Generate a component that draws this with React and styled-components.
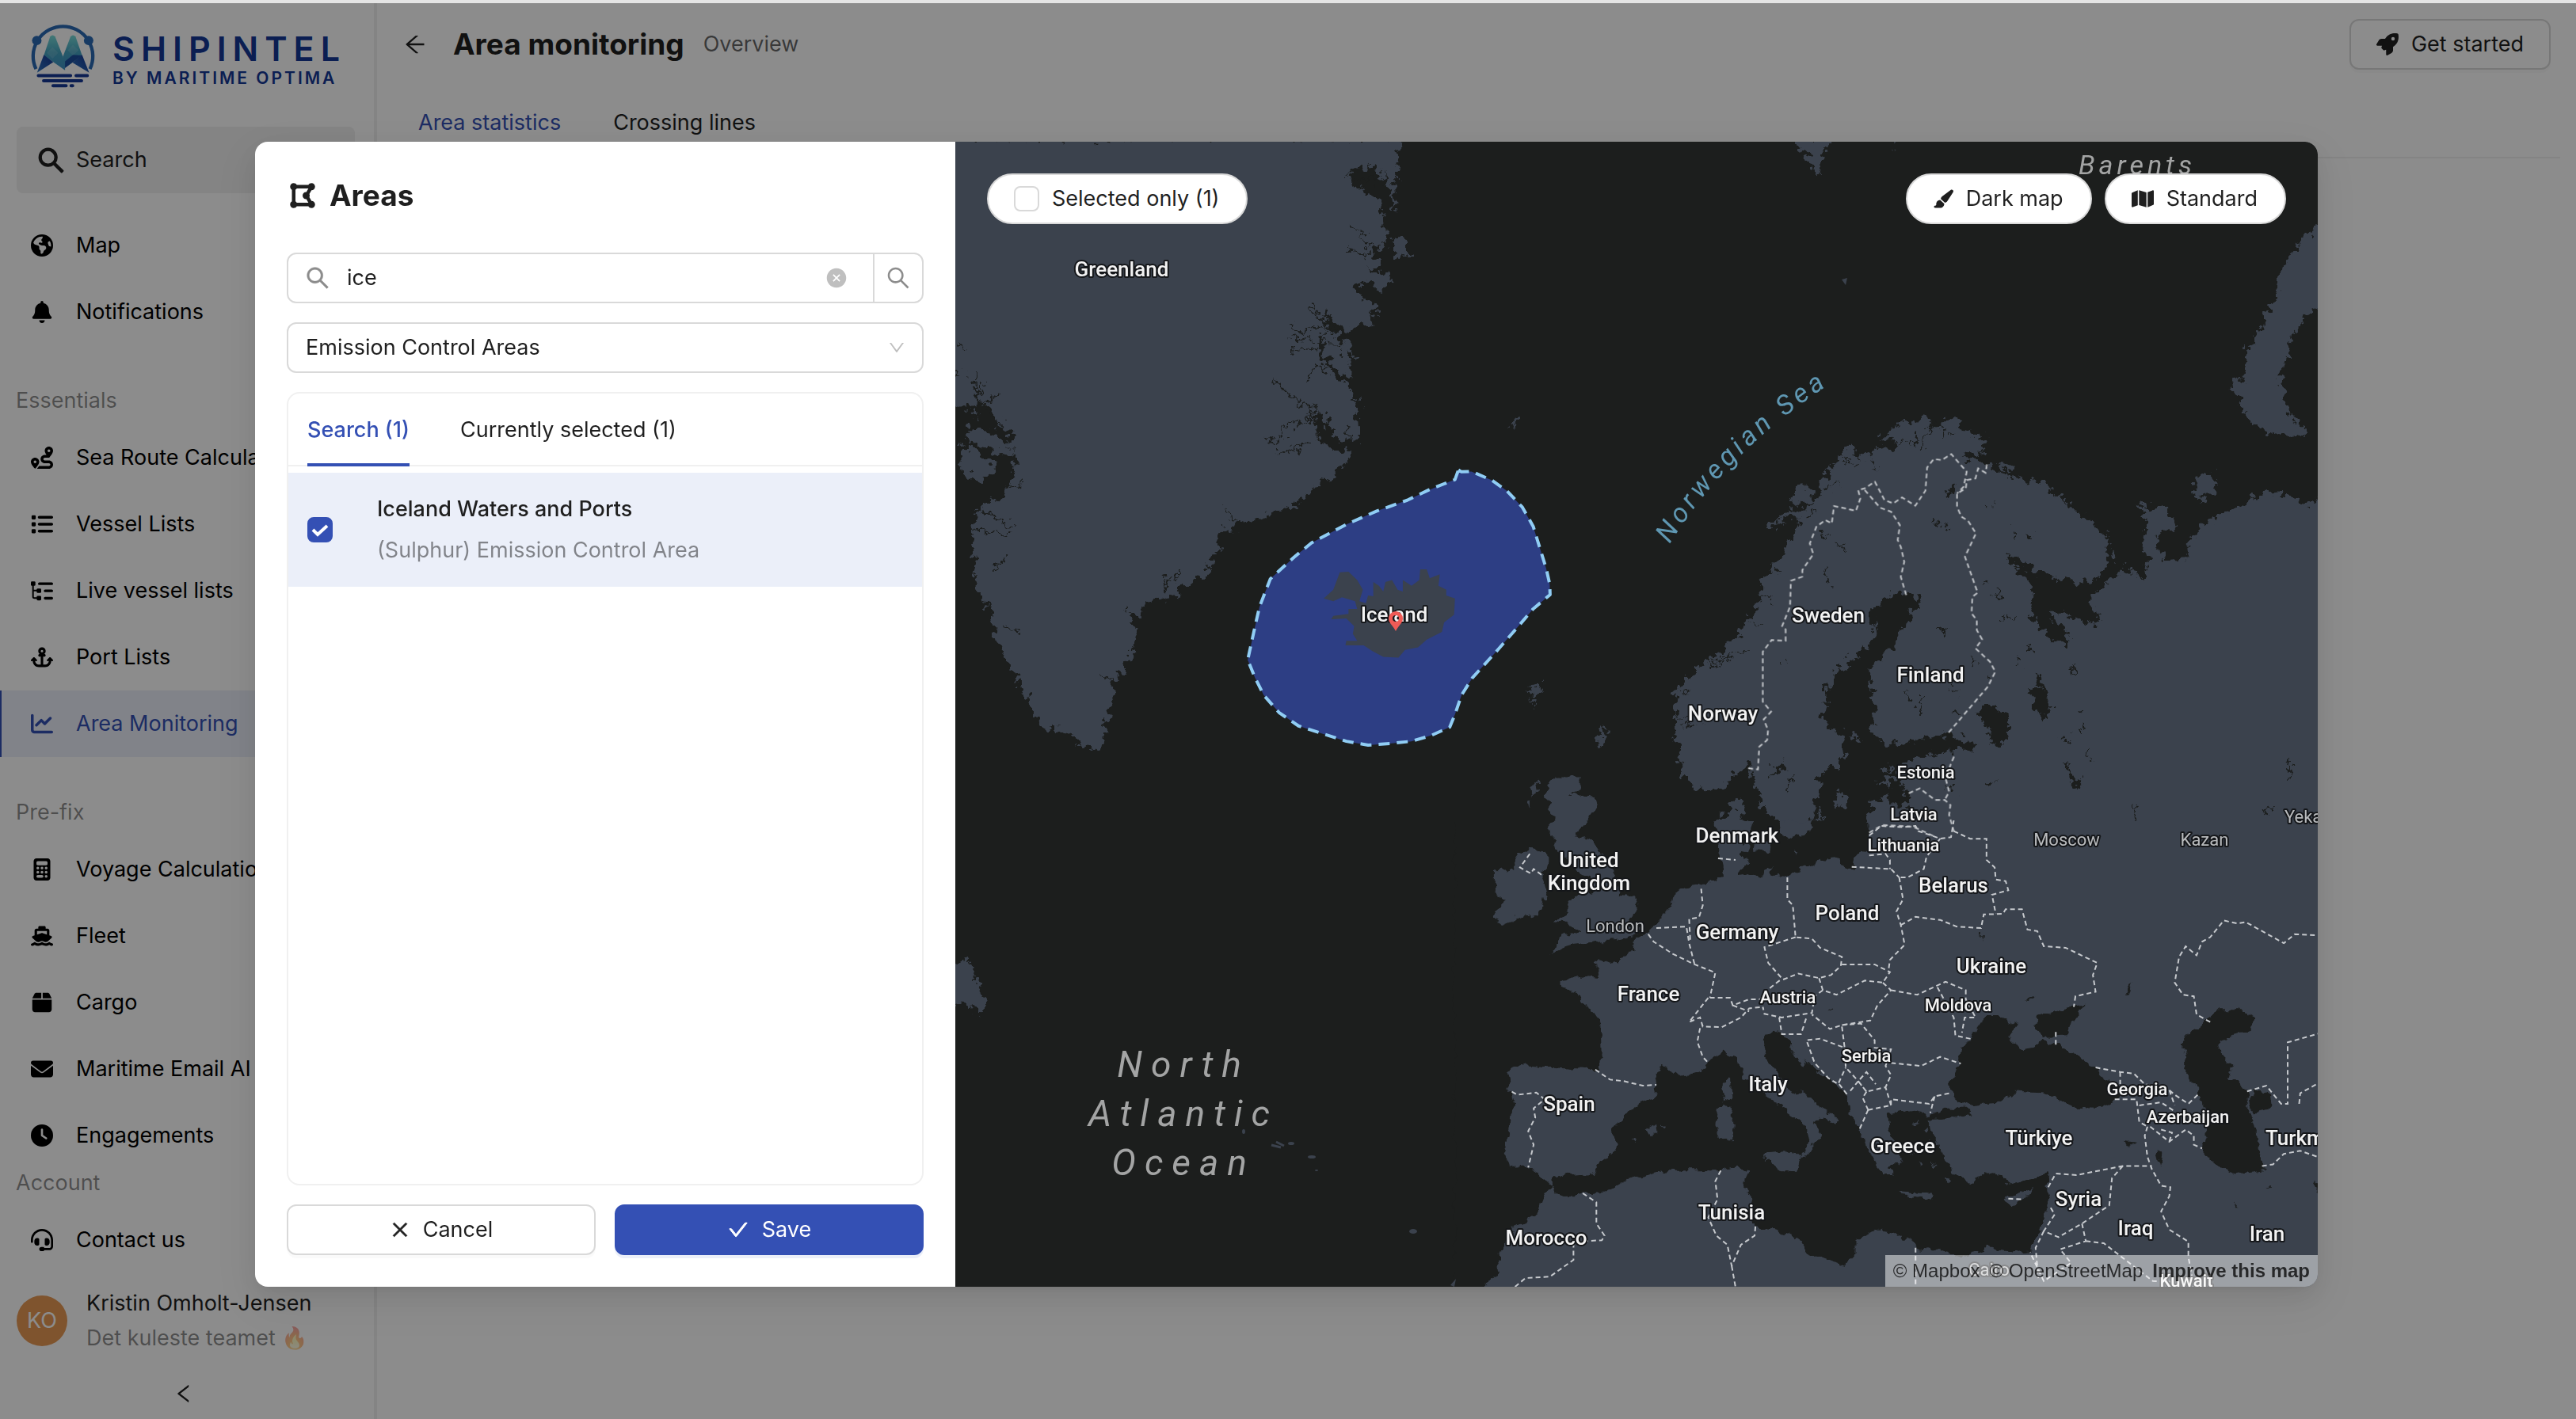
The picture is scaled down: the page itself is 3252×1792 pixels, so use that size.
import React, { useState } from "react";
import styled, { createGlobalStyle, css } from "styled-components";
import {
  FaAnchor,
  FaBell,
  FaBox,
  FaCalculator,
  FaChartLine,
  FaClock,
  FaDrawPolygon,
  FaEarthAmericas,
  FaEnvelope,
  FaHeadset,
  FaList,
  FaMap,
  FaPaintbrush,
  FaRocket,
  FaRoute,
  FaShip,
} from "react-icons/fa6";
import {
  AiFillCloseCircle,
  AiOutlineArrowLeft,
  AiOutlineCheck,
  AiOutlineClose,
  AiOutlineDown,
  AiOutlineLeft,
  AiOutlineSearch,
} from "react-icons/ai";

const primary = "#3450b4";
const ink = "#1f1f1f";
const muted = "rgba(0, 0, 0, 0.45)";
const line = "#f0f0f0";
const control = "#d9d9d9";
const land = "#3b424d";
const water = "#1c1e1d";

const GlobalStyle = createGlobalStyle`
  * {
    box-sizing: border-box;
  }
  body {
    margin: 0;
    background: #fff;
    color: ${ink};
    font-family: Inter, "Liberation Sans", "Noto Color Emoji", sans-serif;
    font-size: 27px;
    line-height: 44px;
  }
  button, input, select {
    font: inherit;
    color: inherit;
    margin: 0;
  }
  button {
    cursor: pointer;
  }
`;

/* ---------- page ---------- */

const Page = styled.div`
  display: flex;
  height: 100vh;
  border-top: 4px solid #e4e4e4;
  overflow: hidden;
`;

const Sidebar = styled.aside`
  flex: none;
  width: 476px;
  display: flex;
  flex-direction: column;
  border-right: 4px solid ${line};
`;

const Brand = styled.a`
  display: flex;
  gap: 22px;
  height: 156px;
  padding: 25px 0 0 39px;
  color: #153896;
  text-decoration: none;
`;

const BrandText = styled.span`
  display: flex;
  flex-direction: column;
  gap: 4px;
  padding-top: 10px;
`;

const BrandName = styled.span`
  font-size: 43px;
  font-weight: 600;
  letter-spacing: 8px;
  line-height: 44px;
`;

const BrandBy = styled.span`
  font-size: 21px;
  font-weight: 600;
  letter-spacing: 3px;
  line-height: 24px;
`;

const SidebarSearch = styled.button`
  display: flex;
  align-items: center;
  gap: 12px;
  height: 84px;
  margin: 0 24px 24px 21px;
  padding: 0 24px;
  border: 0;
  border-radius: 8px;
  background: ${line};

  svg {
    stroke: currentColor;
    stroke-width: 36;
  }
`;

const Nav = styled.nav`
  flex: 1;
  min-height: 0;
  overflow: hidden;
`;

const NavHeading = styled.h2`
  margin: 0;
  padding: 48px 20px 8px;
  color: ${muted};
  font-size: 27px;
  font-weight: 400;
`;

const NavLink = styled.a`
  display: flex;
  align-items: center;
  gap: 29px;
  height: 84px;
  padding-left: 39px;
  color: #000;
  text-decoration: none;
  white-space: nowrap;

  svg {
    flex: none;
    width: 28px;
  }

  ${(p) =>
    p.$active &&
    css`
      color: ${primary};
      background: #ebeff9;
      box-shadow: inset 2px 0 ${primary};
    `}
`;

const FooterHeading = styled(NavHeading)`
  padding: 0 20px 12px;
  line-height: 36px;
`;

const Profile = styled.div`
  display: flex;
  align-items: center;
  gap: 24px;
  padding: 16px 21px;
`;

const Avatar = styled.span`
  width: 64px;
  height: 64px;
  display: grid;
  place-items: center;
  border-radius: 50%;
  background: #e89a55;
  color: #fff;
`;

const ProfileText = styled.div`
  display: flex;
  flex-direction: column;
`;

const Team = styled.span`
  color: ${muted};
`;

const Collapse = styled.button`
  display: grid;
  place-items: center;
  height: 64px;
  padding: 0 8px 0 0;
  border: 0;
  background: none;
`;

const Main = styled.main`
  flex: 1;
  min-width: 0;
`;

const Header = styled.header`
  display: flex;
  align-items: center;
  gap: 24px;
  height: 104px;
  padding: 0 32px;
`;

const BackButton = styled.button`
  display: flex;
  padding: 0;
  border: 0;
  background: none;
`;

const Title = styled.h1`
  margin: 0 0 0 8px;
  font-size: 37px;
  font-weight: 700;
`;

const Subtitle = styled.span`
  flex: 1;
  color: rgba(0, 0, 0, 0.6);
`;

const OutlineButton = styled.button`
  display: flex;
  align-items: center;
  gap: 16px;
  height: 64px;
  padding: 0 32px;
  border: 2px solid ${control};
  border-radius: 12px;
  background: #fff;
  box-shadow: 0 4px 0 rgba(0, 0, 0, 0.02);
`;

const PageTabs = styled.div`
  display: flex;
  gap: 66px;
  height: 92px;
  margin: 0 20px 0 32px;
  padding: 0 20px;
  border-bottom: 2px solid ${line};
`;

const Tab = styled.button`
  padding: 4px 0 0;
  border: 0;
  background: none;
  white-space: nowrap;
  color: ${(p) => (p.$active ? primary : "inherit")};
`;

/* ---------- modal ---------- */

const Overlay = styled.div`
  position: fixed;
  inset: 4px 0 0 0;
  display: flex;
  padding: 175px 326px 167px 322px;
  background: rgba(0, 0, 0, 0.45);
`;

const Modal = styled.div`
  flex: 1;
  display: flex;
  overflow: hidden;
  border-radius: 16px;
  background: #fff;
  box-shadow: 0 12px 32px rgba(0, 0, 0, 0.08), 0 6px 12px -8px rgba(0, 0, 0, 0.12),
    0 18px 56px 16px rgba(0, 0, 0, 0.05);
`;

const Panel = styled.section`
  flex: none;
  width: 884px;
  display: flex;
  flex-direction: column;
  gap: 24px;
  padding: 40px;
`;

const PanelTitle = styled.h2`
  display: flex;
  align-items: center;
  gap: 16px;
  height: 56px;
  margin: 0 0 20px;
  padding-left: 2px;
  font-size: 37px;
  font-weight: 700;
`;

const SearchForm = styled.form`
  display: flex;
  height: 64px;
  border: 2px solid ${control};
  border-radius: 12px;
`;

const SearchLabel = styled.label`
  flex: 1;
  display: flex;
  align-items: center;
  gap: 20px;
  padding-left: 20px;
  color: #8c8c8c;

  svg {
    stroke: currentColor;
    stroke-width: 16;
  }
`;

const SearchInput = styled.input`
  flex: 1;
  min-width: 0;
  padding: 0;
  border: 0;
  outline: 0;
  background: none;
  color: ${ink};
`;

const ClearButton = styled.button`
  display: flex;
  align-items: center;
  padding: 0 32px 0 16px;
  border: 0;
  background: none;
  color: #bfbfbf;
`;

const SubmitButton = styled.button`
  display: grid;
  place-items: center;
  width: 62px;
  padding: 0;
  border: 0;
  border-left: 2px solid ${control};
  background: none;
  color: #8c8c8c;
`;

const SelectBox = styled.div`
  display: grid;
  align-items: center;
  height: 64px;
  border: 2px solid ${control};
  border-radius: 12px;

  select,
  svg {
    grid-area: 1 / 1;
  }
  svg {
    justify-self: end;
    margin-right: 20px;
    color: #bfbfbf;
    pointer-events: none;
  }
`;

const Select = styled.select`
  appearance: none;
  height: 100%;
  padding: 0 22px;
  border: 0;
  outline: 0;
  background: none;
`;

const Results = styled.div`
  flex: 1;
  border: 2px solid ${line};
  border-radius: 16px;
`;

const ResultTabs = styled.div`
  display: flex;
  gap: 64px;
  height: 92px;
  margin-bottom: 8px;
  padding: 0 24px;
  border-bottom: 2px solid ${line};
`;

const ResultTab = styled(Tab)`
  height: 92px;
  border-bottom: 4px solid ${(p) => (p.$active ? primary : "transparent")};
  font-weight: ${(p) => (p.$active ? 500 : 400)};
`;

const ResultRow = styled.label`
  display: flex;
  align-items: center;
  gap: 56px;
  height: 144px;
  padding: 0 24px;
  background: #ebeff9;
`;

const Tick = styled.span`
  flex: none;
  display: grid;
  width: 32px;
  height: 32px;

  input,
  svg {
    grid-area: 1 / 1;
    place-self: center;
  }
  input {
    appearance: none;
    width: 32px;
    height: 32px;
    border: 2px solid ${control};
    border-radius: 8px;
    background: #fff;
  }
  input:checked {
    border-color: ${primary};
    background: ${primary};
  }
  svg {
    pointer-events: none;
  }
`;

const ResultText = styled.span`
  display: flex;
  flex-direction: column;
  gap: 8px;
`;

const ResultName = styled.strong`
  font-weight: 500;
`;

const ResultKind = styled.span`
  color: ${muted};
`;

const Actions = styled.div`
  display: grid;
  grid-template-columns: 1fr 1fr;
  gap: 24px;
`;

const CancelButton = styled(OutlineButton)`
  justify-content: center;

  svg {
    stroke: currentColor;
    stroke-width: 36;
  }
`;

const SaveButton = styled(CancelButton)`
  border-color: ${primary};
  background: ${primary};
  color: #fff;
  box-shadow: 0 4px 0 #ebeff9;
`;

/* ---------- map ---------- */

const MapArea = styled.section`
  position: relative;
  flex: 1;
  min-width: 0;
  overflow: hidden;
  background: ${water};
`;

const MapSvg = styled.svg`
  display: block;
  width: 100%;
  height: 100%;
`;

const MapBar = styled.div`
  position: absolute;
  top: 40px;
  left: 40px;
  right: 40px;
  display: flex;
  justify-content: space-between;
`;

const MapButtons = styled.div`
  display: flex;
  gap: 16px;
`;

const pill = css`
  display: flex;
  align-items: center;
  gap: 16px;
  height: 64px;
  padding: 0 34px 0 32px;
  border: 2px solid ${control};
  border-radius: 32px;
  background: #fff;
`;

const PillLabel = styled.label`
  ${pill}
`;

const PillButton = styled.button`
  ${pill}
`;

const Attribution = styled.div`
  position: absolute;
  right: 0;
  bottom: 0;
  display: flex;
  gap: 12px;
  height: 40px;
  padding: 0 10px;
  background: rgba(255, 255, 255, 0.5);
  font: 24px/40px "Liberation Sans", sans-serif;

  a {
    color: rgba(0, 0, 0, 0.75);
    text-decoration: none;
  }
  a:last-child {
    font-weight: 700;
  }
`;

const PlaceName = styled.text`
  font-family: Roboto, "Liberation Sans", sans-serif;
  font-size: ${(p) => (p.$small ? 22 : 26)}px;
  font-weight: ${(p) => (p.$city ? 400 : 500)};
  fill: ${(p) => (p.$city ? "#b9bbbd" : "#f2f2f2")};
  stroke: #15171a;
  stroke-width: 4px;
  stroke-linejoin: round;
  paint-order: stroke;
  dominant-baseline: central;
`;

const SeaName = styled.text`
  font-family: Roboto, "Liberation Sans", sans-serif;
  font-style: italic;
  font-size: ${(p) => p.$size}px;
  letter-spacing: ${(p) => p.$track}px;
  fill: ${(p) => p.$color || "#a3a4a4"};
`;

// Each sheet has its own grid; transform puts it on the map.
const north = {
  greenland: {
    transform: "translate(0 1) scale(0.5485 0.4847)",
    land: `M-20,-10 L1022,-10 1024,30 1016,76 1012,110 1016,180 1004,150 996,110 990,70 984,100 975,80 960,50 940,72 910,65 915,110 960,140 975,150 985,190 990,240 985,280 960,270 965,300 978,315 970,330 950,325 975,345 1000,340 995,380 980,388 960,365 930,362 915,385 930,400 970,430 960,475 930,475 905,495 875,480 860,460 855,440 848,470 880,500 920,540 918,555 890,545 915,580 912,612 880,590 850,575 905,640 920,660 928,720 932,775 890,780 865,760 850,705 830,700 828,750 850,790 880,808 915,806 900,830 870,870 830,895 800,935 750,955 710,972 670,988 645,985 640,1000 610,1020 603,1060 590,1100 570,1130 530,1155 505,1188 480,1180 440,1195 428,1225 405,1240 413,1270 405,1330 385,1380 362,1400 364,1440 350,1500 340,1540 335,1575 310,1582 290,1570 270,1545 245,1530 200,1522 180,1490 155,1430 140,1390 120,1350 102,1310 88,1270 82,1225 65,1190 45,1150 45,1100 38,1060 42,1010 48,970 65,930 110,935 120,890 135,860 137,820 128,810 130,760 100,740 85,700 60,680 45,650 45,690 0,690 -20,690Z
      M20,755 L35,740 70,750 105,775 130,785 125,810 100,812 70,788 30,780Z
      M15,790 L40,795 65,820 95,840 90,865 50,888 20,860 8,830Z
      M1005,250 L1030,250 1045,290 1015,302Z
      M996,75 L1006,90 1014,180 1004,150Z
      M36,712 L46,698 52,715 44,724Z
      M1272,742 L1285,722 1303,710 1303,722 1288,730Z
      M1314,1432 L1330,1415 1348,1412 1342,1432 1328,1440Z M1330,1445 L1338,1448 1336,1476Z
      M1478,1560 L1484,1525 1500,1515 1496,1560 1486,1580Z`,
    fjords: `M812,420 L830,450 855,468 M770,475 L800,500 830,480 880,500 M765,510 L800,512 845,522 890,520 M770,545 L800,540 835,535 845,560 M735,620 L775,660 820,690 830,760 M722,782 L750,775 760,740 810,725 825,705 M742,812 L775,800 820,785 M912,218 L940,250 965,285 M622,945 L640,985 M480,1130 L485,1170 M510,1125 L485,1150 M40,600 L50,660 72,625 M50,680 L100,660 M75,700 L112,742 M125,892 L155,892 M60,960 L130,1000 M90,1115 L120,1080 M50,1010 L130,1020 M110,1260 L155,1275 M922,85 L960,112 M930,130 L965,90 M905,280 L935,298 955,290 M822,612 L825,585 850,582 M903,740 L903,775 M395,1220 L420,1235 M340,1392 L362,1398 M5,520 L22,540 M0,590 L10,610`,
    sounds: `M845,500 L842,560 880,600 905,630 M850,440 L862,470 905,495`,
  },
  scandinavia: {
    transform: "translate(854 221) scale(0.5548 0.4209)",
    land: `M530,1620 L537,1500 555,1450 580,1440 600,1470 630,1465 630,1430 610,1400 605,1345 650,1320 700,1312 735,1300 775,1298 790,1290 760,1270 720,1250 640,1275 590,1290 560,1265 545,1230 552,1180 545,1120 542,1050 575,1020 600,965 630,920 640,880 655,870 650,840 620,835 590,825 575,850 550,870 545,900 553,940 540,970 535,1000 495,1030 465,1070 445,1110 440,1160 435,1200 445,1235 475,1245 485,1300 465,1350 430,1370 425,1440 410,1500 400,1560 390,1600 360,1610 345,1580 330,1550 310,1500 295,1460 280,1400 270,1350 262,1340 250,1355 225,1385 200,1410 175,1420 145,1415 118,1380 108,1330 105,1280 97,1240 100,1190 97,1140 115,1095 150,1060 190,1020 220,990 255,920 275,880 295,860 290,810 320,750 345,700 370,650 385,600 340,605 320,640 315,625 345,590 390,575 415,560 370,560 360,545 400,495 410,520 405,555 430,540 430,490 450,460 475,430 480,400 505,395 520,420 550,405 555,390 590,400 600,370 565,360 600,335 620,310 640,320 665,295 680,310 670,335 700,330 710,305 735,305 745,330 780,350 810,375 805,395 785,415 750,408 770,430 820,450 860,480 890,485 930,498 960,525 990,555 1005,580 1050,620 1080,650 1090,700 1085,740 1065,780 1030,800 1000,798 960,780 920,765 890,740 865,720 850,705 865,745 895,780 915,820 905,860 915,920 950,960 985,990 1000,970 995,945 970,925 958,900 960,880 985,885 1010,910 1050,925 1065,905 1045,860 1055,830 1085,800 1115,760 1145,770 1165,800 1175,740 1170,710 1158,690 1168,640 1168,590 1145,557 1170,570 1210,570 1230,600 1237,640 1205,645 1190,680 1205,700 1215,730 1260,725 1270,660 1290,650 1295,635 1340,595 1350,575 1390,570 1430,530 1490,535 1530,560 1590,530 1590,1620Z
      M1282,490 L1300,473 1320,480 1333,505 1320,535 1290,552 1280,530Z
      M1440,-10 L1470,-60 1460,-90 1480,-140 1500,-190 1530,-240 1590,-300 1590,-40 1535,-10 1520,30 1500,60 1495,110 1480,150 1475,200 1490,270 1510,315 1533,345 1528,368 1480,355 1440,345 1420,320 1395,290 1390,262 1370,240 1367,200 1378,185 1392,185 1400,120 1395,100 1415,80 1420,50 1440,30Z
      M830,430 L865,445 862,465 838,455Z M186,1600 L188,1510 215,1480 255,1440 250,1490 262,1525 240,1545 240,1600Z
      M460,1485 L468,1432 492,1425 478,1475Z M413,1560 L430,1465 432,1480 420,1560Z M560,1405 L568,1385 602,1380 590,1402Z M566,1358 L590,1352 588,1372Z M498,1262 L508,1252 522,1265 512,1280Z
      M1120,735 L1128,742 1122,750Z`,
    fjords: `M650,410 L690,320 M630,395 L655,340 M700,370 L712,330 M720,360 L735,350 M512,440 L515,400 M480,440 L500,430 M540,430 L560,450 M590,385 L625,370 M440,520 L470,500 M400,600 L420,590 M190,1030 L260,1005 M180,1045 L220,1030 M110,1230 L150,1225 M100,1200 L140,1195 M115,1130 L135,1125 M320,770 L340,762 M290,840 L320,850 M270,920 L300,925 M420,640 L450,665 M440,750 L450,800 M465,680 L485,695 M685,605 L700,625 M900,640 L905,665 M865,640 L868,668 M810,1070 L812,1095 M770,1020 L780,1050 M630,1130 L628,1160 M660,1140 L655,1190 M730,1120 L745,1130 M840,905 L880,900 M905,990 L915,1015 M1022,1180 L1020,1195 M1025,1230 L1030,1250 M1035,1300 L1045,1320 M1140,1460 L1145,1510 M1500,1330 L1495,1380 M350,1430 L370,1370 M900,1120 L920,1130 M1005,1050 L1002,1075 M340,1030 L350,1040 M1440,1500 L1460,1470`,
    lakes: `M800,1165 L825,1175 855,1200 860,1240 845,1280 820,1282 805,1230 785,1195Z M910,1070 L935,1090 940,1130 955,1190 940,1210 920,1180 908,1125 930,1115Z M325,1345 L345,1330 345,1360 312,1380Z M708,530 L742,500 735,525 715,538Z M985,1345 L1005,1375 1025,1400 1010,1408 995,1385Z M718,1410 L730,1410 732,1430 720,1428Z M695,935 L720,945 712,955Z M825,820 L845,835 838,845Z M800,790 L815,800 808,808Z M805,560 L820,565 812,578Z M875,1020 L890,1030 880,1040Z M982,1260 L1000,1265 990,1278Z M808,1400 L826,1398 818,1410Z M710,625 L722,630 715,637Z M725,1180 L742,1190 735,1196Z`,
  },
};

const europe = {
  transform: "translate(644 861) scale(0.6888 0.3827)",
  land: `M20,-5 L1600,-5 1600,1600 20,1600Z`,
  sea: `M-20,-8 L455,-8 465,60 468,120 472,180 445,195 410,205 385,225 378,270 360,315 332,360 312,375 310,420 285,435 280,465 240,448 245,510 215,503 175,515 175,540 205,560 215,600 235,620 250,660 252,740 245,812 200,808 150,800 105,795 75,820 85,850 80,880 88,930 85,980 70,1060 82,1140 115,1135 140,1165 158,1195 145,1220 130,1290 90,1330 75,1380 62,1420 65,1460 35,1530 20,1600 -20,1600Z
    M738,-8 L740,60 735,95 715,110 710,145 690,140 685,118 650,122 620,150 590,178 560,165 565,145 545,150 540,180 520,170 500,175 505,150 520,130 505,100 515,40 525,-8Z
    M157,1192 L165,1170 185,1160 235,1155 245,1120 280,1065 272,1010 300,945 350,895 345,830 365,805 395,830 430,820 450,780 475,758 495,775 510,830 545,890 570,925 595,955 625,1000 632,1060 620,1085 612,1120 640,1060 652,1025 640,985 655,965 680,1000 685,975 645,930 625,895 600,885 578,830 550,775 545,705 575,685 595,720 605,760 650,820 685,870 702,905 705,960 722,1010 735,1060 750,1110 765,1160 785,1160 775,1130 800,1120 790,1080 780,1020 775,960 820,945 850,960 880,940 920,940 930,955 880,970 850,975 855,1030 875,1080 880,1120 900,1160 930,1185 950,1150 980,1160 1000,1190 1045,1165 1068,1150 1065,1200 1070,1240 1055,1330 1035,1410 1000,1415 960,1400 910,1430 870,1410 830,1400 820,1385 780,1350 750,1340 715,1375 715,1420 695,1460 650,1430 620,1410 610,1370 570,1340 530,1330 520,1290 525,1230 510,1190 520,1150 495,1125 465,1145 400,1145 350,1150 290,1180 250,1220 180,1228 162,1215Z
    M905,730 L930,715 935,680 950,640 985,640 1010,660 995,700 1015,745 1045,735 1060,710 1095,740 1130,775 1160,820 1190,870 1198,905 1165,938 1115,935 1060,890 1010,885 970,925 930,932 895,910 888,850 907,795Z
    M1045,680 L1048,640 1080,620 1138,598 1115,640 1105,695 1060,700Z
    M1370,640 L1380,615 1420,615 1447,640 1440,680 1400,700 1380,720 1385,760 1405,800 1400,830 1430,880 1435,940 1445,1000 1455,1080 1462,1145 1415,1160 1375,1120 1352,1100 1355,1040 1365,980 1340,880 1320,820 1320,760 1310,740 1325,690Z
    M1437,900 L1450,880 1475,900 1478,940 1440,950Z
    M1205,570 L1222,525 1215,565Z M1268,1080 L1278,1090 1275,1130Z M1208,1050 L1228,1055 1215,1068Z M1410,1250 L1418,1268 1411,1268Z M1470,1195 L1480,1195 1475,1200Z M1555,1200 L1560,1180 1562,1230Z M945,360 L948,355 947,388Z M1025,580 L1050,575 1045,585Z M665,620 L675,608 672,618Z`,
  islands: `M150,-130 L165,-150 215,-150 210,-120 190,-95 235,-90 240,-50 215,10 200,40 225,50 245,90 260,140 275,180 285,235 310,245 318,275 300,320 290,345 325,352 310,365 270,385 235,390 200,400 180,410 155,430 165,400 185,365 215,355 200,335 170,325 165,315 190,290 185,250 205,235 235,225 235,180 215,170 200,150 190,120 175,100 165,70 158,40 150,10 165,-20 150,-40 160,-70 145,-90Z
    M90,100 L125,80 150,105 150,150 140,170 148,230 138,290 105,305 65,335 50,300 75,260 55,225 55,155 95,150Z
    M118,-110 L132,-140 135,-115 122,-95Z M112,-80 L120,-85 116,-45Z
    M578,-10 L640,-10 632,30 605,35 588,55 582,30Z M530,62 L560,55 556,98 532,95Z M503,62 L522,68 518,92 505,88Z M598,90 L608,92 606,104Z
    M550,1090 L580,1085 618,1088 608,1155 570,1135 552,1110Z M460,940 L485,925 492,960 488,1040 465,1045 458,990Z M470,860 L485,840 486,890 475,922Z
    M330,1010 L350,992 352,1020 338,1030Z M360,990 L372,992 368,1002Z M303,1045 L312,1038 310,1058Z M795,1213 L855,1222 850,1238 800,1228Z M985,1240 L1005,1228 1040,1203 1020,1245 1000,1258Z
    M770,1090 L800,1110 795,1125 765,1100Z M820,990 L830,985 828,998Z M845,1050 L855,1055 848,1068Z M815,1070 L825,1085 818,1085Z M830,1110 L838,1120 832,1125Z M850,1125 L862,1120 858,1132Z M880,1165 L888,1180 882,1190Z M800,1060 L812,1075 806,1078Z M840,1010 L850,1012 845,1022Z
    M595,730 L625,790 620,795 592,740Z M640,815 L660,830 655,835Z`,
};

const borders = {
  scandinavia: `M265,1355 L287,1358 290,1290 308,1270 310,1240 300,1208 317,1185 298,1155 298,1005 318,970 350,972 350,938 342,928 360,870 362,792 388,780 388,760 413,712 405,680 420,630 440,610 455,620 460,568 510,582 520,545 515,520 530,515 553,495 575,550 595,560 615,542 645,567 668,522 672,452 687,427 705,430 727,412 762,465 755,510 740,530
    M530,520 L565,573 590,585 610,625 605,670 612,690 620,735 612,780 625,838
    M808,443 L805,468 788,455 782,485 762,490 760,515 740,530 740,570 750,600 765,612 783,650 758,720 787,828 775,840 773,890 785,910 785,940 797,968 782,995 815,1035 827,1065 810,1110 718,1252
    M733,1320 L725,1345 715,1390 722,1425 712,1450 M630,1430 L655,1415 690,1450 712,1450 725,1465 722,1495 733,1545 M540,1548 L570,1525 640,1530 690,1560`,
  europe: `M740,40 L762,8 800,12 825,8 830,25 855,40 870,50 890,45 895,-10 M870,50 L845,110 840,150 810,178 795,178 M740,105 L770,100 778,120 778,150 M708,143 L780,150 795,178
    M895,25 L925,50 955,50 955,120 970,145 972,185 990,190 995,220 965,235 972,298 M795,178 L802,250 790,290 798,335 805,400 778,450 775,490
    M798,335 L825,308 870,318 900,340 945,345 950,300 985,298 990,283 1020,283 1030,350 1048,355 1060,405 1100,410 1158,460 1150,500 1155,555 1118,570 1115,605
    M590,178 L590,250 600,270 605,375 M432,215 L435,270 428,310 410,315 412,385 M350,345 L405,340 410,395 420,465 M335,365 L345,390 380,430 420,465 458,492 448,575
    M445,575 L410,655 430,640 435,670 470,672 505,640 520,610 545,605 M448,575 L485,575 490,600 520,580 540,580 560,540 580,512 M490,600 L520,620
    M605,375 L548,408 555,460 582,515 610,495 648,510 670,500 688,470 690,440 650,410 635,380 605,375
    M690,465 L750,465 778,490 765,525 732,518 680,565 655,550 648,510 M655,550 L640,570 635,625 580,640 548,628 545,605
    M765,525 L780,550 755,600 742,650 690,665 668,678 635,630 M780,550 L828,565 880,522 917,550 917,580 935,640 915,640 910,690 M865,540 L895,640 898,700 930,712
    M575,640 L580,695 615,695 625,640 M430,675 L425,720 435,770 445,790 M690,670 L695,740 650,710 625,715 640,790 665,840 683,860 697,805
    M690,665 L725,660 750,715 750,740 780,745 770,800 780,830 770,870 735,885 720,850 697,805 695,740 M780,790 L835,800 870,770 908,792
    M738,945 L780,930 780,910 850,925 860,900 892,888 M735,885 L728,905 738,945 M780,930 L770,870 M685,860 L702,900 M720,850 L702,890 M738,945 L722,1010 M860,900 L852,955 M735,885 L720,850 735,820 752,860
    M238,812 L265,845 290,850 325,865 350,862 M85,885 L95,895 130,888 145,910 125,940 128,970 115,1015 125,1060 115,1135 M118,100 L100,145 120,165 125,150 140,170 M463,115 L495,120
    M215,1220 L240,1250 240,1320 255,1360 250,1375 198,1380 198,1440 155,1495 110,1500 90,1530 M468,1145 L458,1180 462,1240 445,1300 460,1360 480,1390 488,1460 505,1390 530,1360 532,1320 M488,1460 L495,1530 M825,1400 L825,1530
    M1155,805 L1200,820 1225,825 1245,860 1290,880 1300,895 1325,925 1345,890 M1190,910 L1230,910 1235,985 1250,1000 M1235,930 L1275,920 1300,950 M1290,880 L1300,930 M1200,820 L1200,860 M1255,1000 L1290,1050 1320,1010 1335,1030 1335,1060 1350,1072 M1275,1010 L1295,1020 1290,1050
    M1250,1000 L1245,1030 1250,1100 1258,1140 1275,1195 1292,1200 1290,1230 1275,1280 1290,1340 1325,1380 1325,1430 1335,1530 M1068,1200 L1082,1155 1120,1160 1205,1130 1258,1130 M1205,1130 L1185,1170 1180,1260 1130,1320 1087,1365 1060,1345 1080,1290 1070,1260
    M1130,1320 L1137,1378 1090,1405 1110,1450 1060,1510 1035,1415 M1137,1378 L1170,1385 1260,1510 1335,1515 M1060,1345 L1045,1400 1050,1500
    M1365,655 L1340,630 1335,570 1315,565 1300,525 1308,440 1320,405 1340,435 1350,390 1365,375 1390,320 1415,330 1430,325 1450,345 1475,370 1500,395 1520,365 1570,370 M1570,690 L1507,722 1507,925 1495,925 1468,865 1430,885 M1528,925 L1530,890 1570,850 M1460,1130 L1480,1125 1500,1090 1530,1080 1570,1105 M1082,688 L1082,735 M995,1238 L1022,1240`,
};

const places = [
  { name: "Greenland", x: 210, y: 161 },
  { name: "Iceland", x: 554, y: 597 },
  { name: "Sweden", x: 1102, y: 598 },
  { name: "Finland", x: 1231, y: 673 },
  { name: "Norway", x: 969, y: 722 },
  { name: "Estonia", x: 1225, y: 796, small: true },
  { name: "Latvia", x: 1210, y: 849, small: true },
  { name: "Lithuania", x: 1197, y: 888, small: true },
  { name: "Denmark", x: 987, y: 876 },
  { name: "Belarus", x: 1260, y: 939 },
  { name: "Poland", x: 1126, y: 974 },
  { name: "Germany", x: 987, y: 998 },
  { name: "United", x: 800, y: 907 },
  { name: "Kingdom", x: 800, y: 936 },
  { name: "London", x: 833, y: 990, city: true, small: true },
  { name: "Moscow", x: 1403, y: 881, city: true, small: true },
  { name: "Kazan", x: 1577, y: 881, city: true, small: true },
  { name: "Yekaterinburg", x: 1678, y: 852, city: true, small: true, anchor: "start" },
  { name: "Ukraine", x: 1308, y: 1041 },
  { name: "France", x: 875, y: 1076 },
  { name: "Austria", x: 1051, y: 1080, small: true },
  { name: "Moldova", x: 1266, y: 1090, small: true },
  { name: "Serbia", x: 1150, y: 1154, small: true },
  { name: "Italy", x: 1026, y: 1190 },
  { name: "Spain", x: 775, y: 1215 },
  { name: "Greece", x: 1196, y: 1268 },
  { name: "Türkiye", x: 1368, y: 1258 },
  { name: "Georgia", x: 1492, y: 1196, small: true },
  { name: "Azerbaijan", x: 1556, y: 1231, small: true },
  { name: "Turkmenistan", x: 1654, y: 1258, anchor: "start" },
  { name: "Tunisia", x: 980, y: 1352 },
  { name: "Syria", x: 1418, y: 1335 },
  { name: "Iraq", x: 1490, y: 1372 },
  { name: "Iran", x: 1656, y: 1379 },
  { name: "Morocco", x: 746, y: 1384 },
  { name: "Cairo", x: 1305, y: 1424, city: true, small: true },
  { name: "Kuwait", x: 1554, y: 1438, small: true },
];

const essentials = [
  { label: "Sea Route Calculator", icon: <FaRoute size={28} /> },
  { label: "Vessel Lists", icon: <FaList size={28} /> },
  { label: "Live vessel lists", icon: <TreeListIcon /> },
  { label: "Port Lists", icon: <FaAnchor size={26} /> },
  { label: "Area Monitoring", icon: <FaChartLine size={28} />, active: true },
];

const prefix = [
  { label: "Voyage Calculations", icon: <FaCalculator size={28} /> },
  { label: "Fleet", icon: <FaShip size={26} /> },
  { label: "Cargo", icon: <FaBox size={28} /> },
  { label: "Maritime Email AI", icon: <FaEnvelope size={28} /> },
  { label: "Engagements", icon: <FaClock size={28} /> },
];

function TreeListIcon() {
  return (
    <svg viewBox="0 0 84 74" width="28" height="25" fill="currentColor">
      <rect x="0" y="0" width="17" height="17" rx="4" />
      <rect x="22" y="27" width="17" height="17" rx="4" />
      <rect x="22" y="55" width="17" height="17" rx="4" />
      <path
        d="M8 10V58Q8 63 13 63H28M8 35H28"
        fill="none"
        stroke="currentColor"
        strokeWidth="6"
      />
      <path
        d="M32 9H79M54 36H79M54 64H79"
        stroke="currentColor"
        strokeWidth="10"
        strokeLinecap="round"
      />
    </svg>
  );
}

function Logo() {
  return (
    <svg viewBox="56 56 244 248" width="81" height="82">
      <defs>
        <linearGradient id="peak" x1="0" y1="0" x2="0" y2="1">
          <stop offset="0" stopColor="#79dcd8" />
          <stop offset="0.5" stopColor="#45a3c0" />
          <stop offset="1" stopColor="#3d8fc4" />
        </linearGradient>
        <linearGradient id="base" x1="1" y1="0" x2="0" y2="1">
          <stop offset="0" stopColor="#143795" />
          <stop offset="1" stopColor="#2f74bd" />
        </linearGradient>
      </defs>
      <path
        d="M75 232A114 114 0 1 1 281 232"
        fill="none"
        stroke="#2a6bb5"
        strokeWidth="13"
      />
      <circle cx="78" cy="123" r="18" fill="#2a6bb5" />
      <circle cx="276" cy="123" r="18" fill="#2a6bb5" />
      <path d="M129 108Q138 98 148 108L186 205V237L105 180Z" fill="url(#peak)" />
      <path d="M207 108Q216 98 226 108L251 180L186 228L178 184Z" fill="url(#peak)" />
      <path d="M105 178L141 206L79 246Z" fill="url(#base)" />
      <path d="M251 178L278 246L214 207Z" fill="url(#base)" />
      <path d="M186 203L216 178L250 180L186 228Z" fill="#1d4f9f" />
      <path d="M138 148L160 170L138 192L116 170ZM216 140L238 160L216 180L196 160Z" fill="#fff" opacity="0.12" />
      <path
        d="M84 257H207M228 257H271M104 277H249M140 296H190M209 296H215"
        stroke="#143795"
        strokeWidth="12"
        strokeLinecap="round"
      />
    </svg>
  );
}

function NavList({ items }) {
  return items.map((item) => (
    <NavLink
      key={item.label}
      href={"#" + item.label.toLowerCase().replace(/ /g, "-")}
      $active={item.active}
    >
      {item.icon}
      {item.label}
    </NavLink>
  ));
}

function SeaMap() {
  return (
    <MapSvg viewBox="0 0 1720 1446" preserveAspectRatio="xMidYMid slice">
      <defs>
        <filter
          id="coast"
          filterUnits="userSpaceOnUse"
          x="-40"
          y="-40"
          width="1800"
          height="1530"
          colorInterpolationFilters="sRGB"
        >
          <feTurbulence type="fractalNoise" baseFrequency="0.1" numOctaves="4" seed="4" />
          <feDisplacementMap in="SourceGraphic" scale="24" xChannelSelector="R" yChannelSelector="G" />
        </filter>
        <filter
          id="shore"
          filterUnits="userSpaceOnUse"
          x="-40"
          y="-40"
          width="1800"
          height="1530"
          colorInterpolationFilters="sRGB"
        >
          <feTurbulence type="fractalNoise" baseFrequency="0.08" numOctaves="3" seed="9" />
          <feDisplacementMap in="SourceGraphic" scale="13" xChannelSelector="R" yChannelSelector="G" />
        </filter>
        <path id="norwegian" d="M902 508Q973 392 1104 306" />
      </defs>

      <g filter="url(#coast)">
        {Object.entries(north).map(([name, s]) => (
          <g key={name} transform={s.transform}>
            <path d={s.land} fill={land} />
            <path d={s.fjords} fill="none" stroke={water} strokeWidth="4" />
            {s.sounds && <path d={s.sounds} fill="none" stroke={water} strokeWidth="12" />}
            {s.lakes && <path d={s.lakes} fill={water} />}
          </g>
        ))}
        <path d="M1058 -4L1068 12 1080 26 1090 48 1094 20 1104 -4ZM1180 -4L1184 6 1192 -4Z" fill={land} />
        <path d="M-10 1042L14 1032 26 1044 24 1056 34 1062 30 1076 38 1084 30 1102 20 1094 14 1086 -10 1092Z" fill={land} />
      </g>

      <g filter="url(#shore)">
        <g transform={europe.transform}>
          <path d={europe.land} fill={land} />
          <path d={europe.sea} fill={water} />
          <path d={europe.islands} fill={land} />
        </g>
      </g>

      <g fill={land}>
        <path d="M1119 174L1126 172 1124 181Z" />
        <ellipse cx="364" cy="1250" rx="2" ry="3" />
        <path d="M399 1267L411 1270M405 1263L415 1268" stroke={land} strokeWidth="3" />
        <ellipse cx="424" cy="1265" rx="4" ry="2" />
        <ellipse cx="450" cy="1282" rx="5" ry="2" />
        <ellipse cx="456" cy="1299" rx="2" ry="1" />
        <ellipse cx="578" cy="1376" rx="5" ry="3" />
        <path d="M625 1444L632 1436 630 1446Z" />
      </g>

      <g fill="none" stroke="#c6c9cd" strokeWidth="2" strokeDasharray="6 4">
        <path d={borders.scandinavia} transform={north.scandinavia.transform} vectorEffect="non-scaling-stroke" />
        <path d={borders.europe} transform={europe.transform} vectorEffect="non-scaling-stroke" />
      </g>

      <g transform={north.greenland.transform}>
        <path
          d="M1158,853 L1165,858 1188,857 1235,880 1270,908 1305,950 1330,1000 1345,1055 1360,1110 1368,1150 1369,1178 1330,1215 1300,1255 1250,1320 1190,1395 1165,1440 1150,1490 1138,1523 1095,1545 1050,1560 1000,1566 950,1570 900,1560 850,1542 790,1520 745,1485 710,1440 690,1395 673,1348 690,1260 700,1210 725,1137 780,1080 820,1043 900,995 970,960 1040,932 1090,905 1150,878Z"
          fill="#2d3e84"
          stroke="#90cdf4"
          strokeWidth="4"
          strokeDasharray="14 9"
          strokeLinejoin="round"
          vectorEffect="non-scaling-stroke"
        />
        <path
          d="M848,1188 L870,1165 885,1120 905,1118 925,1140 938,1165 930,1195 945,1200 950,1180 962,1182 962,1145 975,1155 985,1170 990,1145 1005,1140 1018,1165 1030,1170 1030,1140 1050,1155 1068,1140 1070,1112 1085,1112 1092,1135 1115,1125 1112,1155 1130,1165 1130,1180 1150,1188 1148,1230 1125,1250 1120,1275 1085,1295 1065,1315 1035,1322 1020,1342 985,1340 960,1325 940,1310 898,1310 900,1298 925,1298 915,1280 918,1260 900,1240 865,1242 870,1233 905,1228 905,1215 925,1215 920,1195 890,1185 870,1195Z"
          fill={land}
        />
      </g>

      <SeaName $size={34} $track={5} x="1492" y="41" textAnchor="middle">
        Barents
      </SeaName>
      <SeaName $size={46} $track={11} x="288" y="1181" textAnchor="middle">
        North
      </SeaName>
      <SeaName $size={46} $track={11} x="288" y="1243" textAnchor="middle">
        Atlantic
      </SeaName>
      <SeaName $size={46} $track={11} x="288" y="1305" textAnchor="middle">
        Ocean
      </SeaName>
      <SeaName $size={34} $track={5} $color="#5f97b2">
        <textPath href="#norwegian">Norwegian Sea</textPath>
      </SeaName>

      {places.map((p) => (
        <PlaceName
          key={p.name}
          x={p.x}
          y={p.y}
          $small={p.small}
          $city={p.city}
          textAnchor={p.anchor || "middle"}
        >
          {p.name}
        </PlaceName>
      ))}

      <path
        d="M556 618C552 610 547 608 547 602A9 9 0 0 1 565 602C565 608 560 610 556 618ZM556 598A4 4 0 1 0 556 606A4 4 0 1 0 556 598Z"
        fill="#f05b56"
        fillRule="evenodd"
      />
    </MapSvg>
  );
}

function App() {
  const [query, setQuery] = useState("ice");
  const [checked, setChecked] = useState(true);
  const [selectedOnly, setSelectedOnly] = useState(false);

  return (
    <>
      <GlobalStyle />
      <Page>
        <Sidebar>
          <Brand href="#home">
            <Logo />
            <BrandText>
              <BrandName>SHIPINTEL</BrandName>
              <BrandBy>BY MARITIME OPTIMA</BrandBy>
            </BrandText>
          </Brand>
          <SidebarSearch type="button">
            <AiOutlineSearch size={39} />
            Search
          </SidebarSearch>
          <Nav>
            <NavList
              items={[
                { label: "Map", icon: <FaEarthAmericas size={28} /> },
                { label: "Notifications", icon: <FaBell size={28} /> },
              ]}
            />
            <NavHeading>Essentials</NavHeading>
            <NavList items={essentials} />
            <NavHeading>Pre-fix</NavHeading>
            <NavList items={prefix} />
          </Nav>
          <FooterHeading>Account</FooterHeading>
          <NavList items={[{ label: "Contact us", icon: <FaHeadset size={28} /> }]} />
          <Profile>
            <Avatar>KO</Avatar>
            <ProfileText>
              <span>Kristin Omholt-Jensen</span>
              <Team>Det kuleste teamet 🔥</Team>
            </ProfileText>
          </Profile>
          <Collapse type="button" aria-label="Collapse menu">
            <AiOutlineLeft size={30} />
          </Collapse>
        </Sidebar>

        <Main>
          <Header>
            <BackButton type="button" aria-label="Back">
              <AiOutlineArrowLeft size={32} />
            </BackButton>
            <Title>Area monitoring</Title>
            <Subtitle>Overview</Subtitle>
            <OutlineButton type="button">
              <FaRocket size={28} />
              Get started
            </OutlineButton>
          </Header>
          <PageTabs>
            <Tab type="button" $active>
              Area statistics
            </Tab>
            <Tab type="button">Crossing lines</Tab>
          </PageTabs>
        </Main>
      </Page>

      <Overlay>
        <Modal role="dialog" aria-modal="true" aria-labelledby="areas-title">
          <Panel>
            <PanelTitle id="areas-title">
              <FaDrawPolygon size={36} />
              Areas
            </PanelTitle>
            <SearchForm onSubmit={(e) => e.preventDefault()}>
              <SearchLabel htmlFor="area-search" aria-label="Search areas">
                <AiOutlineSearch size={34} />
                <SearchInput
                  id="area-search"
                  value={query}
                  onChange={(e) => setQuery(e.target.value)}
                />
              </SearchLabel>
              <ClearButton type="button" aria-label="Clear" onClick={() => setQuery("")}>
                <AiFillCloseCircle size={28} />
              </ClearButton>
              <SubmitButton type="submit" aria-label="Search">
                <AiOutlineSearch size={34} />
              </SubmitButton>
            </SearchForm>
            <SelectBox>
              <Select aria-label="Area type">
                <option>Emission Control Areas</option>
              </Select>
              <AiOutlineDown size={24} />
            </SelectBox>
            <Results>
              <ResultTabs>
                <ResultTab type="button" $active>
                  Search (1)
                </ResultTab>
                <ResultTab type="button">Currently selected (1)</ResultTab>
              </ResultTabs>
              <ResultRow>
                <Tick>
                  <input
                    type="checkbox"
                    checked={checked}
                    onChange={(e) => setChecked(e.target.checked)}
                  />
                  {checked && (
                    <svg viewBox="0 0 32 32" width="32" height="32" fill="none">
                      <path d="M7 16L13 22L25 11" stroke="#fff" strokeWidth="4" />
                    </svg>
                  )}
                </Tick>
                <ResultText>
                  <ResultName>Iceland Waters and Ports</ResultName>
                  <ResultKind>(Sulphur) Emission Control Area</ResultKind>
                </ResultText>
              </ResultRow>
            </Results>
            <Actions>
              <CancelButton type="button">
                <AiOutlineClose size={26} />
                Cancel
              </CancelButton>
              <SaveButton type="button">
                <AiOutlineCheck size={28} />
                Save
              </SaveButton>
            </Actions>
          </Panel>

          <MapArea>
            <SeaMap />
            <MapBar>
              <PillLabel>
                <Tick>
                  <input
                    type="checkbox"
                    checked={selectedOnly}
                    onChange={(e) => setSelectedOnly(e.target.checked)}
                  />
                </Tick>
                Selected only (1)
              </PillLabel>
              <MapButtons>
                <PillButton type="button">
                  <FaPaintbrush size={26} />
                  Dark map
                </PillButton>
                <PillButton type="button">
                  <FaMap size={28} />
                  Standard
                </PillButton>
              </MapButtons>
            </MapBar>
            <Attribution>
              <a href="#mapbox">© Mapbox</a>
              <a href="#osm">© OpenStreetMap</a>
              <a href="#improve">Improve this map</a>
            </Attribution>
          </MapArea>
        </Modal>
      </Overlay>
    </>
  );
}

export default App;
